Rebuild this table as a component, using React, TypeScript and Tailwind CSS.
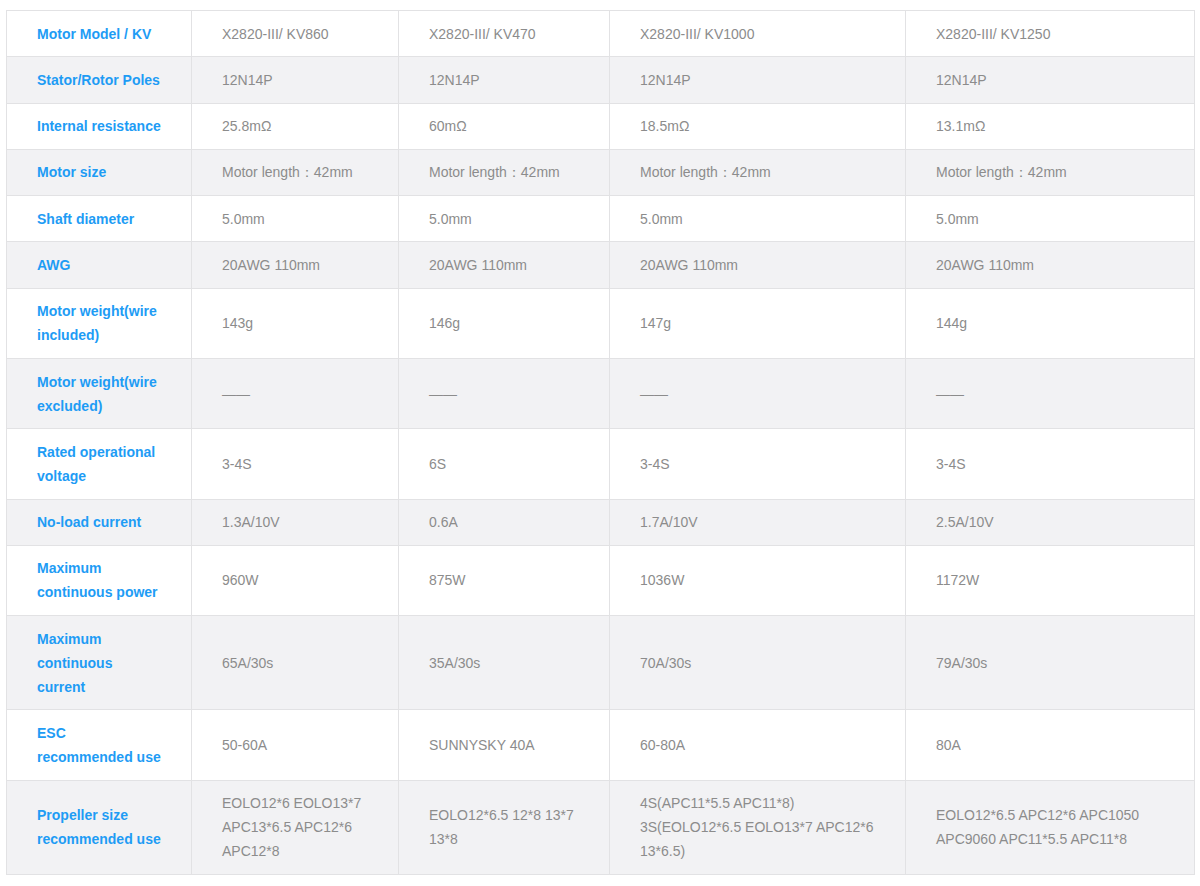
import React from "react";

type Row = { label: React.ReactNode; cells: React.ReactNode[] };

const dash = "——";
const len = "Motor length：42mm";

const rows: Row[] = [
  { label: "Motor Model / KV", cells: ["X2820-III/ KV860", "X2820-III/ KV470", "X2820-III/ KV1000", "X2820-III/ KV1250"] },
  { label: "Stator/Rotor Poles", cells: ["12N14P", "12N14P", "12N14P", "12N14P"] },
  { label: "Internal resistance", cells: ["25.8mΩ", "60mΩ", "18.5mΩ", "13.1mΩ"] },
  { label: "Motor size", cells: [len, len, len, len] },
  { label: "Shaft diameter", cells: ["5.0mm", "5.0mm", "5.0mm", "5.0mm"] },
  { label: "AWG", cells: ["20AWG 110mm", "20AWG 110mm", "20AWG 110mm", "20AWG 110mm"] },
  { label: "Motor weight(wire included)", cells: ["143g", "146g", "147g", "144g"] },
  { label: "Motor weight(wire excluded)", cells: [dash, dash, dash, dash] },
  { label: "Rated operational voltage", cells: ["3-4S", "6S", "3-4S", "3-4S"] },
  { label: "No-load current", cells: ["1.3A/10V", "0.6A", "1.7A/10V", "2.5A/10V"] },
  {
    label: (
      <>
        Maximum
        <br />
        continuous power
      </>
    ),
    cells: ["960W", "875W", "1036W", "1172W"],
  },
  {
    label: (
      <>
        Maximum
        <br />
        continuous
        <br />
        current
      </>
    ),
    cells: ["65A/30s", "35A/30s", "70A/30s", "79A/30s"],
  },
  {
    label: (
      <>
        ESC
        <br />
        recommended use
      </>
    ),
    cells: ["50-60A", "SUNNYSKY 40A", "60-80A", "80A"],
  },
  {
    label: (
      <>
        Propeller size
        <br />
        recommended use
      </>
    ),
    cells: [
      "EOLO12*6 EOLO13*7 APC13*6.5 APC12*6 APC12*8",
      "EOLO12*6.5 12*8 13*7 13*8",
      <>
        4S(APC11*5.5 APC11*8)
        <br />
        3S(EOLO12*6.5 EOLO13*7 APC12*6 13*6.5)
      </>,
      "EOLO12*6.5 APC12*6 APC1050 APC9060 APC11*5.5 APC11*8",
    ],
  },
];

export default function App() {
  return (
    <div className="bg-white w-[1200px] min-h-[886px] pt-[10px] pl-[6px] font-['Liberation_Sans',Arial,sans-serif] text-[14px]">
      <table className="table-fixed border-collapse w-[1188px]">
        <colgroup>
          <col className="w-[185px]" />
          <col className="w-[207px]" />
          <col className="w-[211px]" />
          <col className="w-[296px]" />
          <col className="w-[289px]" />
        </colgroup>
        <tbody>
          {rows.map((r, i) => (
            <tr key={i} className={i % 2 === 1 ? "bg-[#f2f2f4]" : "bg-white"}>
              <td className="border border-[#e2e2e4] pl-[30px] pr-[20px] py-[10.65px] leading-6 font-bold text-[#1e9cf5] align-middle">
                {r.label}
              </td>
              {r.cells.map((c, j) => (
                <td
                  key={j}
                  className="border border-[#e2e2e4] pl-[30px] pr-[28px] py-[10.65px] leading-6 text-[#8c8c8c] align-middle"
                >
                  {c}
                </td>
              ))}
            </tr>
          ))}
        </tbody>
      </table>
    </div>
  );
}
